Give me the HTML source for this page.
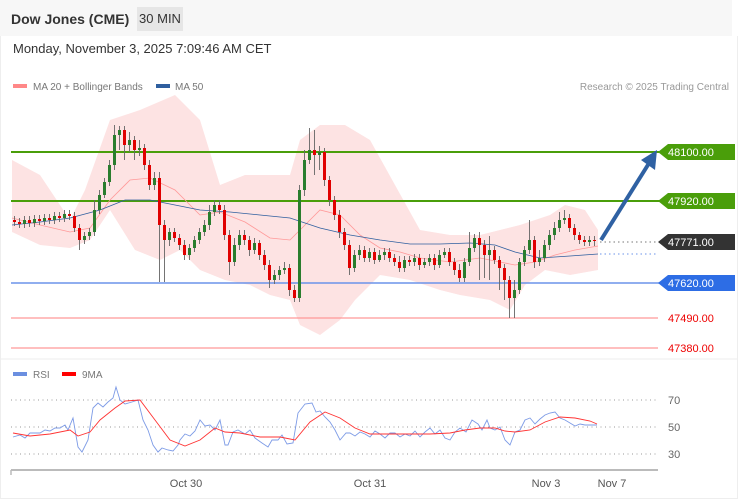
<!DOCTYPE html>
<html><head><meta charset="utf-8"><style>
body{margin:0;width:738px;height:500px;overflow:hidden;background:#fff;font-family:"Liberation Sans",sans-serif;}
.top{position:absolute;left:0;top:0;width:732px;height:36px;background:#f7f7f7;}
.title{position:absolute;left:11px;top:11px;font-size:14px;font-weight:bold;color:#333;}
.tf{position:absolute;left:137px;top:7px;width:46px;height:24px;background:#e6e6e6;font-size:13px;color:#333;line-height:24px;text-align:center;}
.date{position:absolute;left:13px;top:41px;font-size:13px;color:#333;}
.border{position:absolute;left:0;top:36px;width:736px;height:462px;border:1px solid #eee;border-top:none;}
svg{position:absolute;left:0;top:0;}
</style></head><body>
<div class="top"></div>
<div class="title">Dow Jones (CME)</div>
<div class="tf">30 MIN</div>
<div class="date">Monday, November 3, 2025 7:09:46 AM CET</div>
<div class="border"></div>
<svg width="738" height="500" font-family="Liberation Sans, sans-serif">
<rect x="13" y="84" width="14" height="4" fill="#f88"/>
<text x="33" y="90" font-size="10" fill="#777">MA 20 + Bollinger Bands</text>
<rect x="156" y="84" width="14" height="4" fill="#2f5f9f"/>
<text x="175" y="90" font-size="10" fill="#777">MA 50</text>
<text x="729" y="90" font-size="10" fill="#999" text-anchor="end">Research © 2025 Trading Central</text>
<polygon fill="#fde3e3" points="12,160 40,175 70,220 85,190 110,120 140,110 175,95 200,120 220,185 245,175 270,175 290,175 300,140 320,125 345,125 370,140 395,185 420,230 450,235 480,235 500,230 520,225 550,215 565,205 585,210 598,230 598,270 570,275 545,270 525,285 510,310 490,300 460,295 440,290 410,280 380,275 355,300 340,320 320,335 300,325 290,300 270,295 250,285 225,280 200,270 180,250 160,260 135,250 110,210 90,240 70,248 40,245 12,232"/>
<line x1="11" y1="152" x2="660" y2="152" stroke="#4a9e0a" stroke-width="2"/>
<line x1="11" y1="201" x2="660" y2="201" stroke="#4a9e0a" stroke-width="2"/>
<line x1="11" y1="283" x2="660" y2="283" stroke="#6b93ea" stroke-width="1.5"/>
<line x1="11" y1="318" x2="658" y2="318" stroke="#f99" stroke-width="1.2"/>
<line x1="11" y1="348" x2="658" y2="348" stroke="#f99" stroke-width="1.2"/>
<line x1="600" y1="242" x2="658" y2="242" stroke="#777" stroke-dasharray="1.5,3"/>
<line x1="600" y1="254" x2="658" y2="254" stroke="#6b93ea" stroke-dasharray="1.5,3"/>
<polyline fill="none" stroke="#f99" stroke-width="0.8" points="12,218 40,225 70,232 90,228 110,200 130,180 150,178 175,190 200,215 220,212 245,222 270,238 290,240 300,230 320,210 340,215 360,235 380,248 400,252 420,258 450,262 480,258 500,262 515,265 535,262 555,255 575,250 598,246"/>
<polyline fill="none" stroke="#2f5f9f" stroke-width="0.8" points="12,225 40,222 70,218 100,210 125,200 150,200 175,205 200,210 230,212 260,215 290,218 320,228 350,235 380,240 410,244 440,244 470,243 495,245 515,252 540,258 570,256 598,254"/>
<path fill="none" stroke="#666" stroke-width="0.9" d="M14.5 216V226M19.5 218V228M24.5 216V228M29.5 216V227M34.5 215V227M39.5 215V225M44.5 214V225M49.5 214V224M54.5 212V224M59.5 212V222M64.5 210V222M69.5 210V220M74.5 212V232M79.5 224V250M84.5 232V244M89.5 228V240M94.5 200V236M99.5 190V214M104.5 178V198M109.5 160V186M114.5 125V170M119.5 126V150M124.5 126V160M129.5 132V152M134.5 136V160M139.5 140V156M144.5 144V170M149.5 160V190M154.5 172V190M159.5 172V282M164.5 220V282M169.5 228V246M174.5 228V242M179.5 234V250M184.5 240V260M189.5 244V260M194.5 236V252M199.5 228V244M204.5 220V236M209.5 205V230M214.5 200V216M219.5 200V214M224.5 205V240M229.5 230V275M234.5 238V266M239.5 230V250M244.5 230V245M249.5 236V256M254.5 238V254M259.5 240V260M264.5 250V270M269.5 260V288M274.5 270V284M279.5 266V280M284.5 262V274M289.5 264V296M294.5 285V302M299.5 185V302M304.5 150V196M309.5 128V164M314.5 130V175M319.5 146V170M324.5 148V186M329.5 176V206M334.5 196V220M339.5 210V238M344.5 228V250M349.5 240V275M354.5 250V272M359.5 245V260M364.5 246V262M369.5 248V262M374.5 248V264M379.5 250V262M384.5 248V260M389.5 248V262M394.5 254V266M399.5 256V272M404.5 256V272M409.5 256V266M414.5 254V266M419.5 254V270M424.5 258V268M429.5 254V266M434.5 254V270M439.5 250V268M444.5 248V258M449.5 248V266M454.5 258V275M459.5 264V282M464.5 258V282M469.5 232V266M474.5 234V252M479.5 232V280M484.5 240V278M489.5 236V280M494.5 246V264M499.5 256V290M504.5 264V300M509.5 276V318M514.5 280V318M519.5 258V294M524.5 246V266M529.5 220V254M534.5 236V268M539.5 250V266M544.5 240V262M549.5 230V250M554.5 222V240M559.5 212V232M564.5 210V224M569.5 214V232M574.5 224V240M579.5 232V244M584.5 236V246M589.5 236V246M594.5 236V246"/>
<path fill="none" stroke="#2a7d2e" stroke-width="3" d="M24.5 224V220M34.5 223V219M44.5 221V218M54.5 220V216M64.5 218V214M84.5 240V236M89.5 236V232M94.5 232V210M99.5 210V195M104.5 195V182M109.5 182V165M114.5 165V135M119.5 135V130M129.5 145V140M139.5 150V148M154.5 185V178M169.5 240V232M189.5 255V248M194.5 248V240M199.5 240V232M204.5 232V225M209.5 225V212M214.5 212V205M234.5 262V245M239.5 245V235M254.5 250V243M274.5 280V275M279.5 275V270M284.5 270V268M299.5 298V190M304.5 190V160M309.5 160V150M319.5 155V152M354.5 268V255M359.5 255V250M369.5 258V252M379.5 260V255M384.5 255V252M404.5 268V260M414.5 262V258M424.5 265V262M429.5 262V258M439.5 265V255M444.5 255V252M464.5 278V262M469.5 262V248M474.5 248V238M489.5 255V250M514.5 298V290M519.5 290V262M524.5 262V250M529.5 250V240M539.5 262V258M544.5 258V245M549.5 245V235M554.5 235V228M559.5 228V220M564.5 220V218M589.5 242V240"/>
<path fill="none" stroke="#e00000" stroke-width="3" d="M14.5 220V222M19.5 222V224M29.5 220V223M39.5 219V221M49.5 218V220M59.5 216V218M69.5 214V216M74.5 216V228M79.5 228V240M124.5 130V145M134.5 140V150M144.5 148V165M149.5 165V185M159.5 178V225M164.5 225V240M174.5 232V238M179.5 238V245M184.5 245V255M219.5 205V210M224.5 210V235M229.5 235V262M244.5 235V240M249.5 240V250M259.5 243V255M264.5 255V265M269.5 265V280M289.5 268V290M294.5 290V298M314.5 150V155M324.5 152V180M329.5 180V200M334.5 200V215M339.5 215V232M344.5 232V245M349.5 245V268M364.5 250V258M374.5 252V260M389.5 252V258M394.5 258V262M399.5 262V268M409.5 260V262M419.5 258V265M434.5 258V265M449.5 252V262M454.5 262V270M459.5 270V278M479.5 238V245M484.5 245V255M494.5 250V260M499.5 260V268M504.5 268V280M509.5 280V298M534.5 240V262M569.5 218V228M574.5 228V235M579.5 235V240M584.5 240V242M594.5 240V241"/>
<line x1="601" y1="240" x2="651" y2="160" stroke="#2f61a3" stroke-width="4"/>
<polygon points="657,150 641,160 655,170" fill="#2f61a3"/>
<polygon points="658,152 668,144 735,144 735,160 668,160" fill="#4a9e0a"/>
<text x="668" y="156" font-size="11" fill="#fff">48100.00</text>
<polygon points="658,201 668,193 735,193 735,209 668,209" fill="#4a9e0a"/>
<text x="668" y="205" font-size="11" fill="#fff">47920.00</text>
<polygon points="658,242 668,234 735,234 735,250 668,250" fill="#333"/>
<text x="668" y="246" font-size="11" fill="#fff">47771.00</text>
<polygon points="658,283 668,275 735,275 735,291 668,291" fill="#2d6de5"/>
<text x="668" y="287" font-size="11" fill="#fff">47620.00</text>
<text x="668" y="322" font-size="11" fill="#e00">47490.00</text>
<text x="668" y="352" font-size="11" fill="#e00">47380.00</text>
<line x1="0" y1="359" x2="738" y2="359" stroke="#eee"/>
<rect x="13" y="372" width="14" height="4" fill="#6b8fe0"/>
<text x="33" y="378" font-size="10" fill="#777">RSI</text>
<rect x="62" y="372" width="14" height="4" fill="#f00"/>
<text x="82" y="378" font-size="10" fill="#777">9MA</text>
<g stroke="#999" stroke-dasharray="1,3.5"><line x1="11" y1="400" x2="658" y2="400"/><line x1="11" y1="427" x2="658" y2="427"/><line x1="11" y1="454" x2="658" y2="454"/></g>
<text x="668" y="404" font-size="11" fill="#666">70</text>
<text x="668" y="431" font-size="11" fill="#666">50</text>
<text x="668" y="458" font-size="11" fill="#666">30</text>
<polyline fill="none" stroke="#7d9be6" stroke-width="0.9" points="13,437 20,435 25,438 30,433 40,433 45,430 50,431 55,428 60,428 65,425 68,430 73,418 78,447 82,452 88,440 93,408 98,403 103,407 108,402 113,398 116,387 120,400 125,404 132,402 138,400 143,420 148,430 153,445 158,452 162,448 168,450 173,451 178,445 180,440 185,434 190,436 195,431 200,420 205,426 210,425 215,430 220,420 225,445 228,445 233,432 238,430 245,434 250,430 255,438 262,443 268,447 272,440 278,440 282,435 287,444 293,443 298,413 305,404 312,403 316,412 320,411 325,417 330,422 335,430 340,440 346,433 350,433 355,436 360,432 365,434 370,437 375,431 380,434 385,438 390,433 395,433 400,437 405,434 410,436 415,431 420,437 425,432 430,428 435,434 440,430 445,438 450,440 455,432 460,428 466,432 472,420 478,424 482,430 487,420 490,428 495,430 500,427 505,440 510,445 515,432 520,430 525,420 530,418 535,424 540,419 545,415 550,413 555,412 560,418 565,420 570,423 575,426 580,424 585,425 590,425 597,425"/>
<polyline fill="none" stroke="#f33" stroke-width="0.9" points="13,433 30,436 50,434 70,430 78,436 90,432 100,420 115,408 125,401 140,400 155,420 170,440 185,446 200,440 215,428 225,432 240,433 260,437 280,437 295,440 310,422 325,412 340,418 355,428 370,434 400,434 430,434 450,433 465,430 480,428 495,428 505,431 515,432 530,430 545,422 560,417 575,418 590,421 597,424"/>
<line x1="11" y1="470" x2="658" y2="470" stroke="#bbb" stroke-width="2"/>
<line x1="11" y1="470" x2="11" y2="475" stroke="#bbb" stroke-width="1.5"/>
<g font-size="11" fill="#555" text-anchor="middle"><text x="186" y="487">Oct 30</text><text x="370" y="487">Oct 31</text><text x="546" y="487">Nov 3</text><text x="612" y="487">Nov 7</text></g>
</svg>
</body></html>
